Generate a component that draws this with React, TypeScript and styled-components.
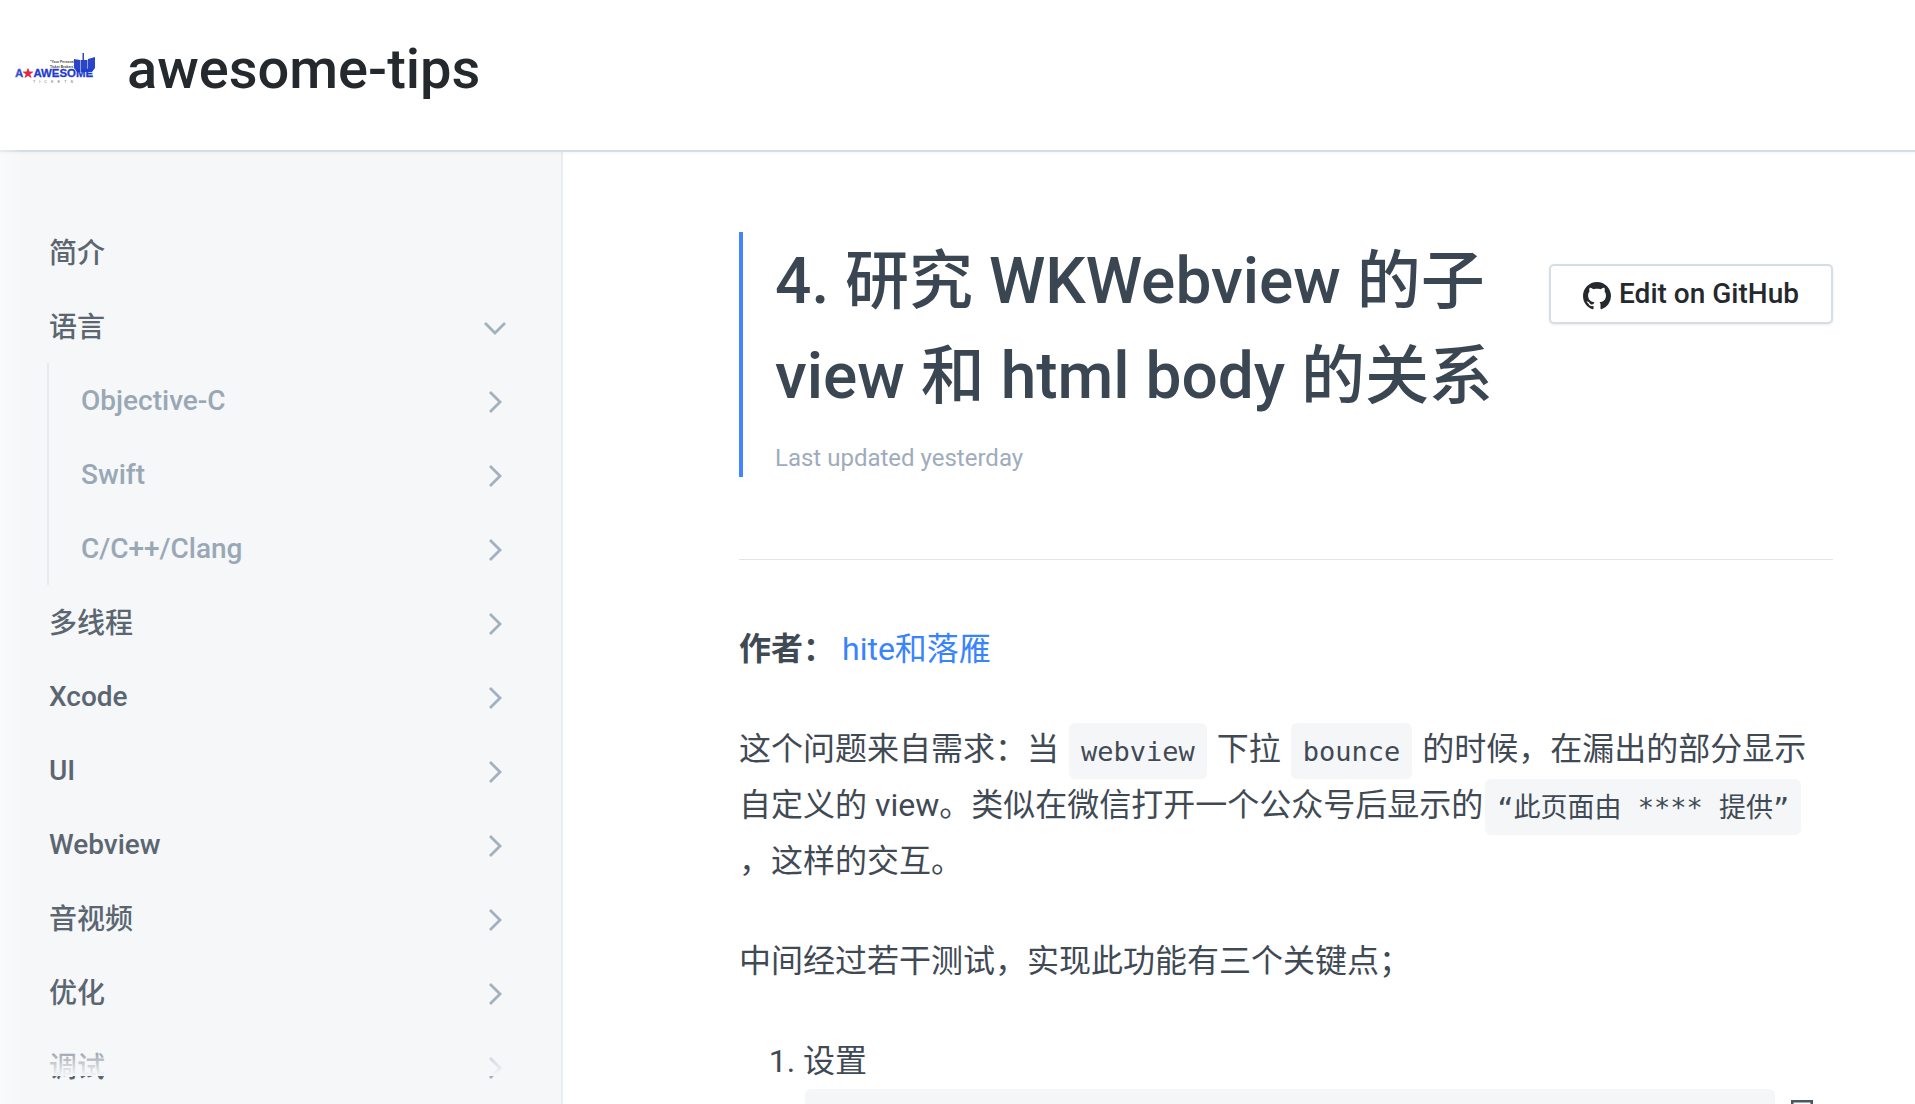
import React from "react";
import styled, { createGlobalStyle } from "styled-components";

const Global = createGlobalStyle`
  html, body { margin: 0; padding: 0; height: 100%; overflow: hidden; background: #fff; }
  body { font-family: Roboto, "Noto Sans CJK SC", sans-serif; color: #3b4550; }
  * { box-sizing: border-box; }
`;

const Page = styled.div`
  position: relative;
  width: 1915px;
  height: 1104px;
  overflow: hidden;
  display: flex;
  flex-direction: column;
`;

const EdgeFade = styled.div`
  position: absolute;
  left: 0;
  top: 0;
  bottom: 0;
  width: 24px;
  background: linear-gradient(to right, rgba(255, 255, 255, 0.45), rgba(255, 255, 255, 0));
  pointer-events: none;
  z-index: 3;
`;

const Header = styled.header`
  height: 152px;
  flex: none;
  display: flex;
  align-items: center;
  padding-left: 14px;
  background: #fff;
  border-bottom: 2px solid #d5dce2;
  box-shadow: 0 1px 3px rgba(0, 0, 0, 0.05);
  z-index: 2;
`;

const LogoBox = styled.svg`
  width: 82px;
  height: 32px;
  flex: none;
  margin: 0 31px 12px 0;
`;

const SiteTitle = styled.h1`
  margin: 0;
  padding-bottom: 10px;
  font-size: 56px;
  font-weight: 500;
  color: #24292e;
  line-height: 1.2;
`;

const Body = styled.div`
  flex: 1;
  min-height: 0;
  display: flex;
`;

const Sidebar = styled.aside`
  position: relative;
  width: 563px;
  flex: none;
  background: #f5f7f9;
  border-right: 2px solid #e9edf1;
  padding: 63px 49px 0;
  overflow: hidden;
`;

const BottomFade = styled.div`
  position: absolute;
  left: 0;
  right: 0;
  top: 882px;
  height: 42px;
  background: linear-gradient(to bottom, rgba(245, 247, 249, 0), #f5f7f9);
`;

const SideRow = styled.div<{ $sub?: boolean }>`
  height: 74px;
  display: flex;
  align-items: center;
  justify-content: space-between;
  font-size: 28px;
  font-weight: 500;
  color: ${(p) => (p.$sub ? "#9aa8b6" : "#5b6671")};
  padding-left: ${(p) => (p.$sub ? "32px" : "0")};
  padding-right: 3px;
`;

const SideLabel = styled.span<{ $cjk?: boolean }>`
  padding-bottom: ${(p) => (p.$cjk ? "3px" : "0")};
`;

const SubGroup = styled.div`
  border-left: 2px solid #e4eaf0;
  margin-left: -2px;
`;

const Chevron = styled.svg`
  width: 28px;
  height: 28px;
  flex: none;
  margin-top: 4px;
  fill: none;
  stroke: #a3b0bd;
  stroke-width: 2.8;
  stroke-linejoin: miter;
`;

const Main = styled.main`
  flex: 1;
  min-width: 0;
  padding: 80px 82px 0 176px;
  overflow: hidden;
`;

const TitleHead = styled.div`
  display: flex;
  align-items: flex-start;
  justify-content: space-between;
  padding-bottom: 82px;
  border-bottom: 1px solid #e3e6e9;
`;

const TitleBlock = styled.div`
  border-left: 4px solid #4285ff;
  padding: 2px 0 0 32px;
  width: 780px;
  height: 245px;
`;

const DocTitle = styled.h2`
  margin: 0;
  font-size: 64px;
  line-height: 95px;
  font-weight: 500;
  color: #3a4651;
`;

const Updated = styled.div`
  font-size: 24px;
  line-height: 32px;
  margin-top: 18px;
  color: #9eacbb;
`;

const EditButton = styled.a`
  margin-top: 32px;
  width: 284px;
  height: 60px;
  display: flex;
  align-items: center;
  justify-content: center;
  gap: 8px;
  padding-bottom: 2px;
  border: 2px solid #d5dee6;
  border-radius: 5px;
  box-shadow: 0 1px 3px rgba(0, 0, 0, 0.08);
  font-size: 28px;
  font-weight: 500;
  color: #24292e;
  background: #fff;
`;

const GithubMark = styled.svg`
  width: 28px;
  height: 28px;
  margin-top: 6px;
  fill: #24292e;
`;

const Article = styled.article`
  padding-top: 61px;
  font-size: 32px;
  line-height: 56px;
  color: #3f4a55;
`;

const Para = styled.p`
  margin: 0 0 44px;
`;

const Strong = styled.strong`
  font-weight: 700;
`;

const LinkText = styled.a`
  color: #3884ff;
  margin-left: 7px;
`;

const Code = styled.code`
  font-family: "DejaVu Sans Mono", "Noto Sans CJK SC", monospace;
  font-size: 27px;
  line-height: 1;
  white-space: nowrap;
  background: #f5f6f8;
  border-radius: 6px;
  padding: 12.5px 12px;
  margin: 0 2px;
`;

const List = styled.ol`
  margin: 0;
  padding-left: 64px;
`;

const CodeWrap = styled.div`
  position: relative;
  padding: 0 58px 0 66px;
`;

const CodeBlock = styled.div`
  height: 120px;
  background: #f5f6f8;
  border-radius: 6px;
`;

const CopyIcon = styled.svg`
  position: absolute;
  left: 1052px;
  top: 11px;
  width: 22px;
  height: 24px;
  fill: none;
  stroke: #4b5763;
  stroke-width: 2.5;
`;

const chevR = "M9 4l10 10-10 10";
const chevD = "M4 9l10 10 10-10";

function Row({ label, sub, open, cjk }: { label: string; sub?: boolean; open?: boolean; cjk?: boolean }) {
  return (
    <SideRow $sub={sub}>
      <SideLabel $cjk={cjk}>{label}</SideLabel>
      {label !== "简介" && (
        <Chevron viewBox="0 0 28 28">
          <path d={open ? chevD : chevR} />
        </Chevron>
      )}
    </SideRow>
  );
}

export default function App() {
  return (
    <Page>
      <Global />
      <EdgeFade />
      <Header>
        <LogoBox viewBox="0 0 82 32">
          <text x="36" y="10" fontSize="3.4" fontWeight="700" fontFamily="Liberation Sans" fill="#444">"Your Personal</text>
          <text x="36" y="14.5" fontSize="3.4" fontWeight="700" fontFamily="Liberation Sans" fill="#444">Ticket Brokers"</text>
          <path d="M60 6l6 1v12h-3l-3-4zM66.5 7h7v12h-7zM74 6l7-2v11l-3 4h-4zM68.5 7V0h1.5v7z" fill="#2a45c8" />
          <text x="1" y="24" fontSize="11.2" fontWeight="700" fontFamily="Liberation Sans" fill="#1f3bd0" stroke="#1f3bd0" strokeWidth="0.3" textLength="78" lengthAdjust="spacingAndGlyphs">A<tspan fill="#e5283a" stroke="#e5283a">★</tspan>AWESOME</text>
          <text x="19" y="30" fontSize="3.8" fontFamily="Liberation Sans" fill="#667" textLength="40">TICKETS</text>
        </LogoBox>
        <SiteTitle>awesome-tips</SiteTitle>
      </Header>
      <Body>
        <Sidebar>
          <Row label="简介" cjk />
          <Row label="语言" open cjk />
          <SubGroup>
            <Row label="Objective-C" sub />
            <Row label="Swift" sub />
            <Row label="C/C++/Clang" sub />
          </SubGroup>
          <Row label="多线程" cjk />
          <Row label="Xcode" />
          <Row label="UI" />
          <Row label="Webview" />
          <Row label="音视频" cjk />
          <Row label="优化" cjk />
          <Row label="调试" cjk />
          <BottomFade />
        </Sidebar>
        <Main>
          <TitleHead>
            <TitleBlock>
              <DocTitle>4. 研究 WKWebview 的子 view 和 html body 的关系</DocTitle>
              <Updated>Last updated yesterday</Updated>
            </TitleBlock>
            <EditButton>
              <GithubMark viewBox="0 0 16 16">
                <path d="M8 0C3.58 0 0 3.58 0 8c0 3.54 2.29 6.53 5.47 7.59.4.07.55-.17.55-.38 0-.19-.01-.82-.01-1.49-2.01.37-2.53-.49-2.69-.94-.09-.23-.48-.94-.82-1.13-.28-.15-.68-.52-.01-.53.63-.01 1.08.58 1.23.82.72 1.21 1.87.87 2.33.66.07-.52.28-.87.51-1.07-1.78-.2-3.64-.89-3.64-3.95 0-.87.31-1.59.82-2.15-.08-.2-.36-1.02.08-2.12 0 0 .67-.21 2.2.82.64-.18 1.32-.27 2-.27s1.36.09 2 .27c1.53-1.04 2.2-.82 2.2-.82.44 1.1.16 1.92.08 2.12.51.56.82 1.27.82 2.15 0 3.07-1.87 3.75-3.65 3.95.29.25.54.73.54 1.48 0 1.07-.01 1.93-.01 2.2 0 .21.15.46.55.38A8.01 8.01 0 0 0 16 8c0-4.42-3.58-8-8-8z" />
              </GithubMark>
              Edit on GitHub
            </EditButton>
          </TitleHead>
          <Article>
            <Para>
              <Strong>作者：</Strong>
              <LinkText>hite和落雁</LinkText>
            </Para>
            <Para>
              这个问题来自需求：当 <Code>webview</Code> 下拉 <Code>bounce</Code> 的时候，在漏出的部分显示自定义的 view。类似在微信打开一个公众号后显示的<wbr /><Code>“此页面由 **** 提供”</Code><br />，这样的交互。
            </Para>
            <Para>中间经过若干测试，实现此功能有三个关键点；</Para>
            <List>
              <li>设置</li>
            </List>
            <CodeWrap>
              <CodeBlock />
              <CopyIcon viewBox="0 0 22 24">
                <rect x="1.25" y="1.25" width="19.5" height="21.5" />
                <path d="M1 6h20" />
              </CopyIcon>
            </CodeWrap>
          </Article>
        </Main>
      </Body>
    </Page>
  );
}
